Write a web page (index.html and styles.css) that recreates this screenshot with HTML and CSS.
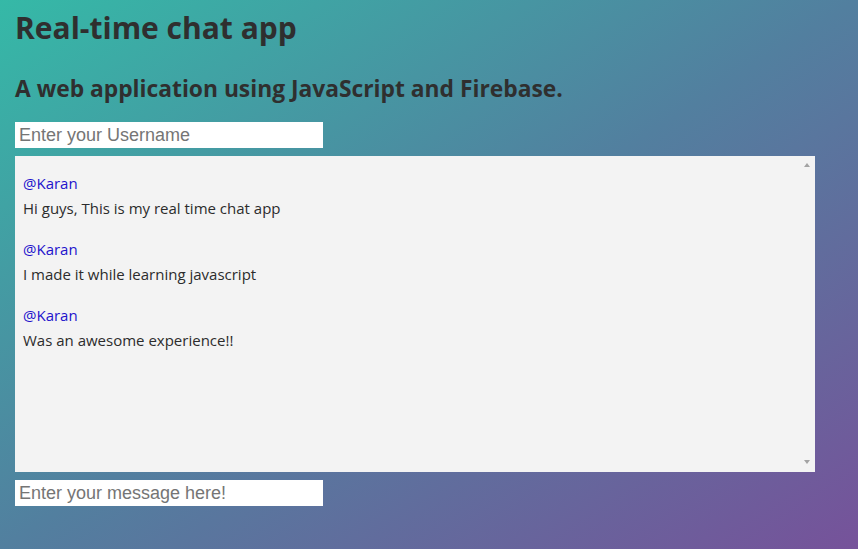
FILE: index.html
```html
<!DOCTYPE html>
<html lang="en">
<head>
<meta charset="utf-8">
<title>Real-time chat app</title>
<link rel="stylesheet" href="styles.css">
</head>
<body>
<h1 class="title">Real-time chat app</h1>
<h2 class="subtitle">A web application using JavaScript and Firebase.</h2>
<input class="field" type="text" placeholder="Enter your Username">
<div class="chat-wrap">
  <div class="chat">
    <div class="msg">
      <div class="user">@Karan</div>
      <div class="text">Hi guys, This is my real time chat app</div>
    </div>
    <div class="msg">
      <div class="user">@Karan</div>
      <div class="text">I made it while learning javascript</div>
    </div>
    <div class="msg">
      <div class="user">@Karan</div>
      <div class="text">Was an awesome experience!!</div>
    </div>
  </div>
</div>
<input class="field" type="text" placeholder="Enter your message here!">
</body>
</html>
```
FILE: styles.css
```css
html, body {
  height: 100%;
}
body {
  margin: 0;
  padding: 0 15px;
  background: linear-gradient(to bottom right, #35b9a7 0%, #527f9f 50%, #76529a 100%);
  font-family: "Open Sans", "Noto Sans", sans-serif;
  color: #2f2f2f;
  display: flex;
  flex-direction: column;
  align-items: flex-start;
}
.title {
  font-size: 30px;
  font-weight: 700;
  margin: 8px 0 0;
  line-height: 40px;
}
.subtitle {
  font-size: 22.8px;
  font-weight: 700;
  margin: 26px 0 0;
  line-height: 30px;
}
.field {
  width: 308px;
  height: 26px;
  box-sizing: border-box;
  border: none;
  outline: none;
  padding: 0 4px;
  font-family: "Liberation Sans", Arial, sans-serif;
  font-size: 18px;
  background: #fff;
  color: #333;
  margin-top: 8px;
}
.subtitle + .field {
  margin-top: 18px;
}
.chat-wrap {
  position: relative;
  margin-top: 8px;
}
.chat-wrap::before,
.chat-wrap::after {
  content: "";
  position: absolute;
  right: 5px;
  width: 0;
  height: 0;
  border-left: 3.5px solid transparent;
  border-right: 3.5px solid transparent;
}
.chat-wrap::before {
  top: 7px;
  border-bottom: 4px solid #a3a3a3;
}
.chat-wrap::after {
  bottom: 8px;
  border-top: 4px solid #a3a3a3;
}
.chat {
  width: 800px;
  height: 316px;
  box-sizing: border-box;
  background: #f3f3f3;
  overflow-y: auto;
  padding: 15px 25px 15px 8px;
  font-family: "Open Sans", "Noto Sans", sans-serif;
  font-size: 15px;
}
.msg {
  margin-bottom: 16px;
}
.user {
  color: #2212cc;
  line-height: 25px;
}
.text {
  color: #2c2c2c;
  line-height: 25px;
}
```
